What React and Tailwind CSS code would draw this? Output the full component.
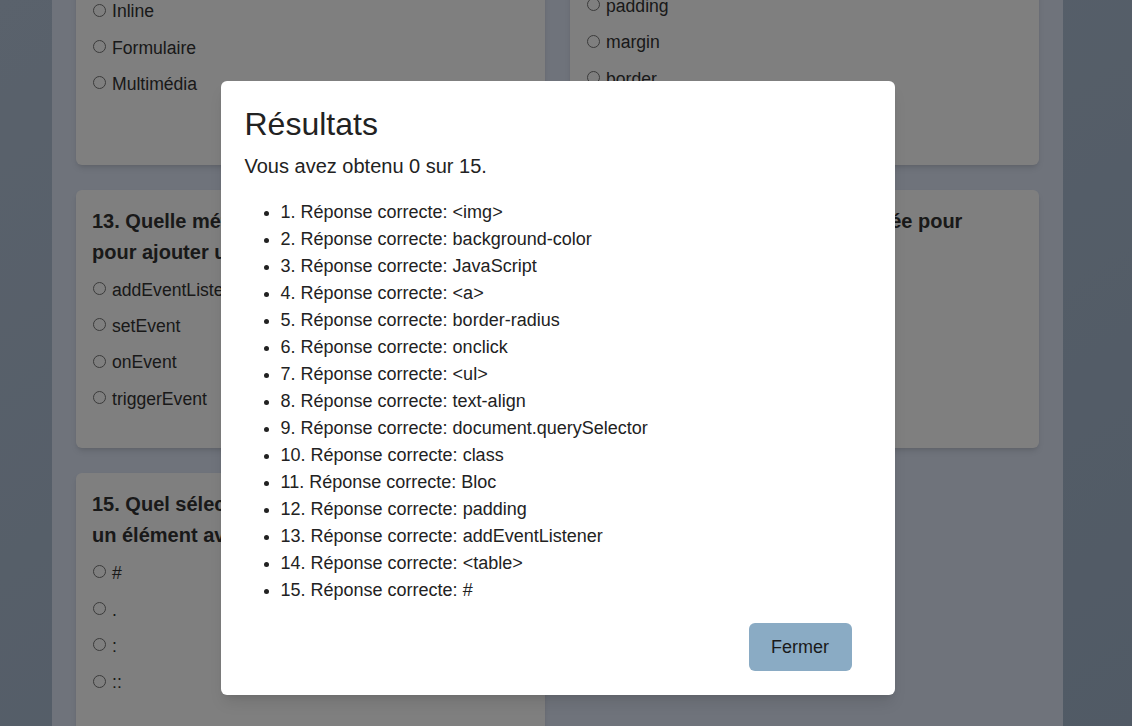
import React from 'react';

const questions = [
  {
    id: 11,
    text: "11. Quel type d'élément est <div> ?",
    options: ['Bloc', 'Inline', 'Formulaire', 'Multimédia'],
  },
  {
    id: 12,
    text: "12. Quelle propriété CSS est utilisée pour ajouter de l'espace intérieur ?",
    options: ['padding', 'margin', 'border', 'outline'],
  },
  {
    id: 13,
    text: "13. Quelle méthode JavaScript est utilisée pour ajouter un écouteur d'événement ?",
    options: ['addEventListener', 'setEvent', 'onEvent', 'triggerEvent'],
  },
  {
    id: 14,
    text: '14. Quelle balise HTML est utilisée pour définir un tableau ?',
    options: ['<table>', '<tab>', '<tr>', '<grid>'],
  },
  {
    id: 15,
    text: '15. Quel sélecteur CSS est utilisé pour cibler un élément avec un id ?',
    options: ['#', '.', ':', '::'],
  },
];

const answers = [
  '<img>',
  'background-color',
  'JavaScript',
  '<a>',
  'border-radius',
  'onclick',
  '<ul>',
  'text-align',
  'document.querySelector',
  'class',
  'Bloc',
  'padding',
  'addEventListener',
  '<table>',
  '#',
];

const QuestionCard = ({ q }) => (
  <div className="bg-white rounded-md shadow-md px-4 pt-4 pb-[36px] text-[#333]">
    <h3 className="text-[20px] leading-[31px] font-bold mb-[9px]">{q.text}</h3>
    <div className="flex flex-col gap-[10px]">
      {q.options.map((opt) => (
        <label key={opt} className="text-[17.6px] leading-[26.4px] flex items-center">
          <input type="radio" name={`q${q.id}`} className="w-[13px] h-[13px] ml-px mr-[6px] -mt-[3px]" />
          {opt}
        </label>
      ))}
    </div>
  </div>
);

export default function App() {
  return (
    <div
      className="relative h-[726px] overflow-hidden bg-linear-to-br from-[#b4c4d8] to-[#a2b5cb]"
      style={{ fontFamily: '"Liberation Sans", Arial, sans-serif' }}
    >
      <div className="ml-[52px] w-[1011px] h-full bg-[#dee6f6] px-6 flex flex-col">
        <div className="grid grid-cols-2 gap-x-[25px] gap-y-[25px] -mt-[94px]">
          {questions.map((q) => (
            <QuestionCard key={q.id} q={q} />
          ))}
        </div>
      </div>

      <div className="absolute inset-0 bg-black/50 flex justify-center items-start pt-[81px] pr-[17px]">
        <div className="w-[674px] h-[614px] bg-white rounded-md shadow-lg p-6 text-[#222]">
          <h2 className="text-[32px] leading-[38px] mb-2">Résultats</h2>
          <p className="text-[20px] leading-[30px] mb-[18px]">Vous avez obtenu 0 sur 15.</p>
          <ul className="list-disc pl-9 text-[18px] leading-[27px]">
            {answers.map((a, i) => (
              <li key={i}>
                {i + 1}. Réponse correcte: {a}
              </li>
            ))}
          </ul>
          <div className="flex justify-end pr-[19px] mt-[19px]">
            <button className="w-[103px] h-[48px] rounded-md bg-[#8aabc4] text-[18px] text-[#1a1a1a]">
              Fermer
            </button>
          </div>
        </div>
      </div>
    </div>
  );
}
